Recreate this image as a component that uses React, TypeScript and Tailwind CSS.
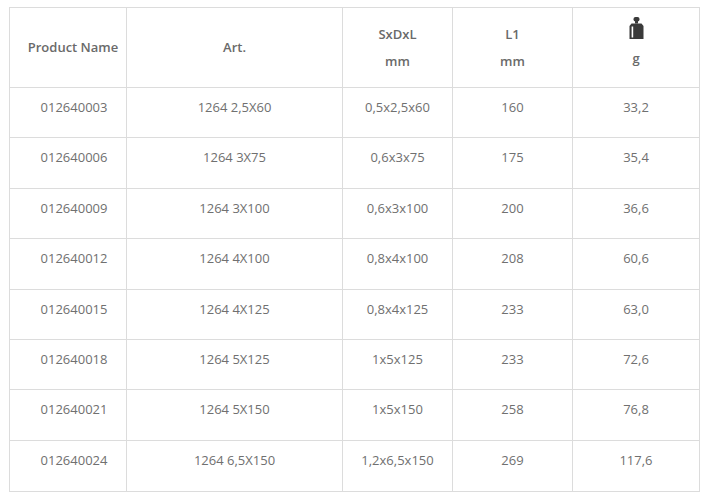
const rows = [
  ['012640003', '1264 2,5X60', '0,5x2,5x60', '160', '33,2'],
  ['012640006', '1264 3X75', '0,6x3x75', '175', '35,4'],
  ['012640009', '1264 3X100', '0,6x3x100', '200', '36,6'],
  ['012640012', '1264 4X100', '0,8x4x100', '208', '60,6'],
  ['012640015', '1264 4X125', '0,8x4x125', '233', '63,0'],
  ['012640018', '1264 5X125', '1x5x125', '233', '72,6'],
  ['012640021', '1264 5X150', '1x5x150', '258', '76,8'],
  ['012640024', '1264 6,5X150', '1,2x6,5x150', '269', '117,6'],
];

const cols = 'grid grid-cols-[116px_216px_110px_120px_127px]';

function WeightIcon() {
  return (
    <svg width="15" height="22" viewBox="0 0 15 22">
      <rect x="4.5" y="0" width="6" height="4.5" rx="2" fill="#3a3a3a" />
      <rect x="6" y="4" width="3" height="2.5" fill="#3a3a3a" />
      <path d="M2.5 6.5 H12.5 L14.5 9 V22 H0.5 V9 Z" fill="#3a3a3a" />
      <rect x="2.6" y="9.5" width="1.6" height="11" fill="#ffffff" />
    </svg>
  );
}

export default function App() {
  return (
    <div className="w-[702px] h-[495px] bg-white pt-[7px] pl-[9px]" style={{ fontFamily: '"Open Sans", "Noto Sans", sans-serif' }}>
      <div className="w-[691px] border border-[#dcdcdc] text-[13px] text-[#707070]">
        <div className={`${cols} h-[80px] font-semibold text-[#6a6a6a] border-b border-[#dcdcdc]`}>
          <div className="flex items-center justify-center pl-[10px]">Product Name</div>
          <div className="flex items-center justify-center border-l border-[#dcdcdc]">Art.</div>
          <div className="flex flex-col items-center justify-center gap-[7px] border-l border-[#dcdcdc] leading-[20px]">
            <span>SxDxL</span>
            <span>mm</span>
          </div>
          <div className="flex flex-col items-center justify-center gap-[7px] border-l border-[#dcdcdc] leading-[20px]">
            <span>L1</span>
            <span>mm</span>
          </div>
          <div className="flex flex-col items-center pt-[9px] border-l border-[#dcdcdc]">
            <WeightIcon />
            <span className="mt-[10px] leading-[18px]">g</span>
          </div>
        </div>
        {rows.map((r, i) => (
          <div key={r[0]} className={`${cols} h-[50.4px] ${i < rows.length - 1 ? 'border-b border-[#dcdcdc]' : ''}`}>
            {r.map((c, j) => (
              <div key={j} className={`text-center pt-[9px] leading-[20px] ${j === 0 ? 'pl-[12px]' : 'border-l border-[#dcdcdc]'}`}>
                {c}
              </div>
            ))}
          </div>
        ))}
      </div>
    </div>
  );
}
